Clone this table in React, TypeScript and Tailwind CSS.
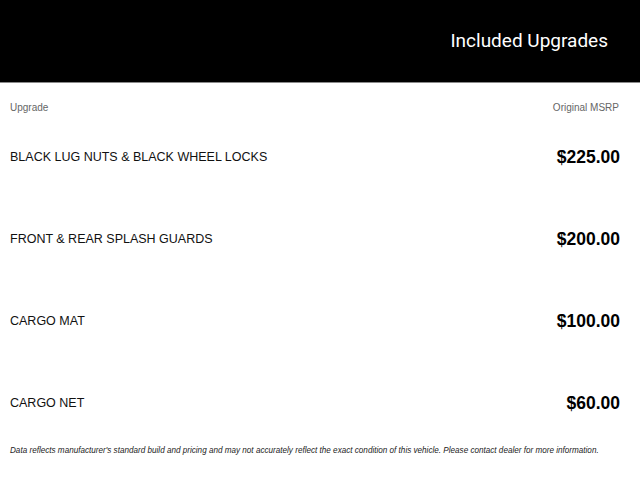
const upgrades = [
  { name: 'BLACK LUG NUTS & BLACK WHEEL LOCKS', price: '$225.00' },
  { name: 'FRONT & REAR SPLASH GUARDS', price: '$200.00' },
  { name: 'CARGO MAT', price: '$100.00' },
  { name: 'CARGO NET', price: '$60.00' },
];

export default function App() {
  return (
    <div className="w-[640px] h-[480px] bg-white overflow-hidden font-['Liberation_Sans',Arial,sans-serif]">
      {/* Header */}
      <div className="h-[83px] bg-black border-b border-[#8a8a8a] flex items-center justify-end pr-8">
        <h1 className="text-white text-[19px] font-['Roboto',sans-serif] font-normal">Included Upgrades</h1>
      </div>

      {/* Column labels */}
      <div className="flex justify-between items-center h-5 mt-[14px] pl-[10px] pr-[21px] text-[10px] text-[#666]">
        <span>Upgrade</span>
        <span>Original MSRP</span>
      </div>

      {/* Rows */}
      <div className="-mt-px">
        {upgrades.map((u) => (
          <div key={u.name} className="h-[82px] flex items-center justify-between pl-[10px] pr-5">
            <span className="text-[12.5px] leading-4 text-[#111]">{u.name}</span>
            <span className="text-[17.5px] leading-6 font-bold text-black">{u.price}</span>
          </div>
        ))}
      </div>

      <p className="mt-px pl-[10px] text-[8.15px] italic text-[#222] leading-3 whitespace-nowrap">
        Data reflects manufacturer's standard build and pricing and may not accurately reflect the exact condition of this vehicle. Please contact dealer for more information.
      </p>
    </div>
  );
}
